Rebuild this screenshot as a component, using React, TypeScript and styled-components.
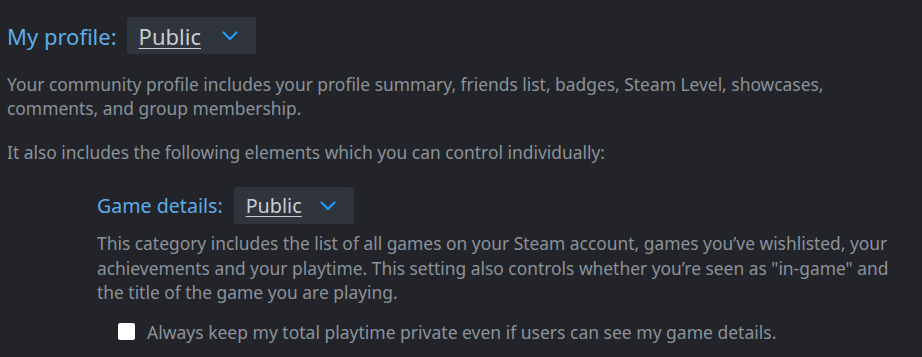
import React from "react";
import styled, { createGlobalStyle } from "styled-components";

const Global = createGlobalStyle`
  html, body { margin: 0; padding: 0; background: #222429; }
  body { font-family: "Noto Sans", "Open Sans", sans-serif; }
`;

const Page = styled.div`
  width: 922px;
  height: 357px;
  background: #222429;
  box-sizing: border-box;
  padding: 17px 0 0 7px;
  overflow: hidden;
`;

const SettingRow = styled.div<{ $indent?: number; $gap: number; $mt?: number }>`
  display: flex;
  align-items: center;
  gap: ${(p) => p.$gap}px;
  margin: ${(p) => p.$mt ?? 0}px 0 0 ${(p) => p.$indent ?? 0}px;
`;

const Label = styled.span<{ $big?: boolean }>`
  color: #5eace6;
  font-size: ${(p) => (p.$big ? 22 : 19.6)}px;
  line-height: 30px;
`;

const Dropdown = styled.div<{ $w: number }>`
  display: flex;
  align-items: center;
  justify-content: space-between;
  box-sizing: border-box;
  width: ${(p) => p.$w}px;
  height: 37px;
  padding: 0 18px 0 12px;
  background: #30343c;
  border-radius: 3px;
`;

const Value = styled.span<{ $big?: boolean }>`
  color: #c9cdd2;
  font-size: ${(p) => (p.$big ? 22 : 19.8)}px;
  line-height: 30px;
  text-decoration: underline;
  text-underline-offset: 3px;
  text-decoration-thickness: 1px;
`;

const Para = styled.p<{ $indent?: number; $mt: number; $lh: number }>`
  margin: ${(p) => p.$mt}px 0 0 ${(p) => p.$indent ?? 0}px;
  color: #8b929a;
  font-size: 17.4px;
  line-height: ${(p) => p.$lh}px;
`;

const CheckRow = styled.label`
  display: flex;
  align-items: center;
  gap: 12px;
  margin: 15px 0 0 111px;
  color: #8b929a;
  font-size: 17.5px;
  line-height: 24px;
`;

const Box = styled.span`
  width: 17px;
  height: 17px;
  flex: none;
  box-sizing: border-box;
  background: #ffffff;
  border-radius: 2px;
`;

const Chevron = () => (
  <svg width="16" height="10" viewBox="0 0 16 10" fill="none">
    <path d="M1.5 1.5 L8 8 L14.5 1.5" stroke="#1a9fff" strokeWidth="2.2" strokeLinecap="round" strokeLinejoin="round" />
  </svg>
);

export default function App() {
  return (
    <Page>
      <Global />
      <SettingRow $gap={10}>
        <Label $big>My profile:</Label>
        <Dropdown $w={129}>
          <Value $big>Public</Value>
          <Chevron />
        </Dropdown>
      </SettingRow>
      <Para $mt={18} $lh={24}>
        Your community profile includes your profile summary, friends list, badges, Steam Level, showcases,
        <br />
        comments, and group membership.
      </Para>
      <Para $mt={20} $lh={24}>
        It also includes the following elements which you can control individually:
      </Para>
      <SettingRow $indent={90} $gap={11} $mt={23}>
        <Label>Game details:</Label>
        <Dropdown $w={120}>
          <Value>Public</Value>
          <Chevron />
        </Dropdown>
      </SettingRow>
      <Para $indent={90} $mt={7} $lh={24.5}>
        This category includes the list of all games on your Steam account, games you’ve wishlisted, your
        <br />
        achievements and your playtime. This setting also controls whether you’re seen as "in-game" and
        <br />
        the title of the game you are playing.
      </Para>
      <CheckRow>
        <Box />
        Always keep my total playtime private even if users can see my game details.
      </CheckRow>
    </Page>
  );
}
